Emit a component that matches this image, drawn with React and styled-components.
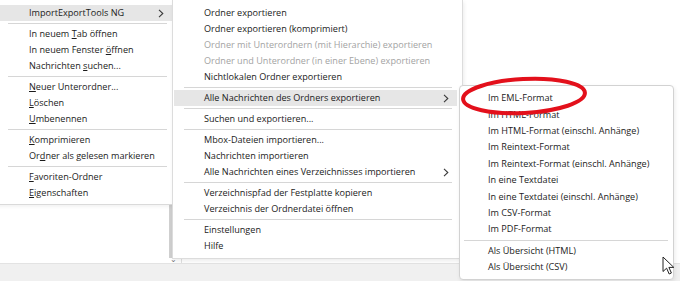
import React from 'react';
import styled, { createGlobalStyle } from 'styled-components';

const folderMenu = [
    { label: 'ImportExportTools NG', arrow: true, active: true },
    { sep: true },
    { label: 'In neuem &Tab öffnen' },
    { label: 'In neuem Fenster &öffnen' },
    { label: 'Nachrichten &suchen...' },
    { sep: true },
    { label: '&Neuer Unterordner...' },
    { label: '&Löschen' },
    { label: '&Umbenennen' },
    { sep: true },
    { label: '&Komprimieren' },
    { label: 'Or&dner als gelesen markieren' },
    { sep: true },
    { label: '&Favoriten-Ordner' },
    { label: '&Eigenschaften' },
];

const toolsMenu = [
    { label: 'Ordner exportieren' },
    { label: 'Ordner exportieren (komprimiert)' },
    { label: 'Ordner mit Unterordnern (mit Hierarchie) exportieren', disabled: true },
    { label: 'Ordner und Unterordner (in einer Ebene) exportieren', disabled: true },
    { label: 'Nichtlokalen Ordner exportieren' },
    { sep: true },
    { label: 'Alle Nachrichten des Ordners exportieren', arrow: true, active: true },
    { sep: true },
    { label: 'Suchen und exportieren...' },
    { sep: true },
    { label: 'Mbox-Dateien importieren...' },
    { label: 'Nachrichten importieren' },
    { label: 'Alle Nachrichten eines Verzeichnisses importieren', arrow: true },
    { sep: true },
    { label: 'Verzeichnispfad der Festplatte kopieren' },
    { label: 'Verzeichnis der Ordnerdatei öffnen' },
    { sep: true },
    { label: 'Einstellungen' },
    { label: 'Hilfe' },
];

const formatMenu = [
    { label: 'Im EML-Format' },
    { label: 'Im HTML-Format' },
    { label: 'Im HTML-Format (einschl. Anhänge)' },
    { label: 'Im Reintext-Format' },
    { label: 'Im Reintext-Format (einschl. Anhänge)' },
    { label: 'In eine Textdatei' },
    { label: 'In eine Textdatei (einschl. Anhänge)' },
    { label: 'Im CSV-Format' },
    { label: 'Im PDF-Format' },
    { sep: true },
    { label: 'Als Übersicht (HTML)' },
    { label: 'Als Übersicht (CSV)' },
];

// '&' marks the access key letter
const renderLabel = (label) => {
    const i = label.indexOf('&');
    if (i < 0) return label;
    return (
        <>
            {label.slice(0, i)}
            <AccessKey>{label[i + 1]}</AccessKey>
            {label.slice(i + 2)}
        </>
    );
};

const Chevron = () => (
    <ArrowIcon width='6' height='9' viewBox='0 0 6 9'>
        <path d='M1 0.8 L4.8 4.5 L1 8.2' fill='none' stroke='#3a3a3a' strokeWidth='1.1' />
    </ArrowIcon>
);

const Menu = ({ items, variant }) => (
    <MenuList>
        {items.map((item, index) => item.sep ? (
            <Separator key={`sep-${index}`} $variant={variant} />
        ) : (
            <Item
                key={`item-${index}`}
                $variant={variant}
                $active={item.active}
                $disabled={item.disabled}
            >
                <Label>{renderLabel(item.label)}</Label>
                {item.arrow && <Chevron />}
            </Item>
        ))}
    </MenuList>
);

const App = () => {
    return (
        <Page>
            <GlobalStyle />
            <Workspace>
                <FolderPane />
                <Splitter>
                    <SplitterGrip>⌄</SplitterGrip>
                </Splitter>
                <MainPane />
            </Workspace>
            <StatusBar />

            <FolderPopup>
                <Menu items={folderMenu} variant='flat' />
            </FolderPopup>
            <ToolsPopup>
                <Menu items={toolsMenu} variant='inset' />
            </ToolsPopup>
            <FormatPopup>
                <Menu items={formatMenu} variant='round' />
            </FormatPopup>

            <Marker width='134' height='46' viewBox='0 0 134 46'>
                <ellipse cx='67' cy='23' rx='61' ry='17' fill='none' stroke='#e3101b' strokeWidth='4' transform='rotate(-3 67 23)' />
            </Marker>
            <Cursor width='14' height='20' viewBox='0 0 14 20'>
                <path d='M1 1 L1 15.5 L4.6 12.2 L7.2 18 L9.4 17 L6.9 11.4 L11.8 11.4 Z' fill='#fff' stroke='#222' strokeWidth='1' strokeLinejoin='round' />
            </Cursor>
        </Page>
    );
};

const GlobalStyle = createGlobalStyle`
    html, body {
        margin: 0;
        padding: 0;
        background: #fff;
    }
    body {
        font-family: "Open Sans", "Noto Sans", sans-serif;
        color: #1b1b1b;
    }
`;
const Page = styled.div`
    position: relative;
    width: 680px;
    height: 281px;
    overflow: hidden;
    display: flex;
    flex-direction: column;
    background: #fff;
`;
const Workspace = styled.div`
    flex: 1;
    display: flex;
`;
const FolderPane = styled.div`
    width: 169px;
    background: #fff;
`;
const Splitter = styled.div`
    position: relative;
    width: 3px;
    margin-bottom: 5px;
    background: #cfcfcf;
`;
const SplitterGrip = styled.span`
    position: absolute;
    bottom: -5px;
    left: 1px;
    font-size: 8px;
    line-height: 8px;
    color: #777;
`;
const MainPane = styled.div`
    flex: 1;
    border-left: 1px solid #e0e0e0;
    margin-left: 9px;
`;
const StatusBar = styled.div`
    height: 17px;
    background: #f0f0f0;
    border-top: 1px solid #e3e3e3;
`;
const Popup = styled.div`
    position: absolute;
    background: #fff;
    box-sizing: border-box;
`;
const FolderPopup = styled(Popup)`
    left: -4px;
    top: 0;
    width: 177px;
    padding: 5px 0 3px;
    border-right: 1px solid #dadada;
    border-bottom: 1px solid #dadada;
    box-shadow: 1px 2px 3px rgba(0, 0, 0, 0.05);
`;
const ToolsPopup = styled(Popup)`
    left: 172px;
    top: 0;
    width: 291px;
    padding: 5px 0 4px;
    border: 1px solid #dcdcdc;
    border-top: none;
    box-shadow: 1px 2px 4px rgba(0, 0, 0, 0.08);
`;
const FormatPopup = styled(Popup)`
    left: 459px;
    top: 85px;
    width: 215px;
    padding: 4px 0 4px;
    border: 1px solid #d2d2d2;
    border-radius: 4px;
    box-shadow: 1px 2px 4px rgba(0, 0, 0, 0.08);
`;
const MenuList = styled.div`
    display: flex;
    flex-direction: column;
`;
const Item = styled.div`
    display: flex;
    align-items: center;
    height: ${({ $variant }) => ($variant === 'round' ? '16.4px' : '16px')};
    margin: ${({ $variant }) => ($variant === 'inset' ? '0 5px 0 1px' : '0')};
    padding-left: ${({ $variant }) => ($variant === 'flat' ? '33px' : $variant === 'inset' ? '30px' : '28px')};
    padding-right: ${({ $variant }) => ($variant === 'flat' ? '8px' : '8px')};
    font-size: 9.1px;
    white-space: nowrap;
    color: ${({ $disabled }) => ($disabled ? '#a3a3a3' : '#1b1b1b')};
    background: ${({ $active }) => ($active ? '#e6e6e6' : 'transparent')};
`;
const Label = styled.span`
    flex: 1;
    line-height: 16px;
`;
const AccessKey = styled.span`
    text-decoration: underline;
    text-underline-offset: 1px;
`;
const ArrowIcon = styled.svg`
    display: block;
    flex: none;
`;
const Separator = styled.div`
    height: 1px;
    margin: ${({ $variant }) => ($variant === 'flat' ? '2px 5px 2px 12px' : $variant === 'inset' ? '2px 10px 2px 11px' : '2px 5px 2px 4px')};
    background: #d6d6d6;
`;
const Marker = styled.svg`
    position: absolute;
    left: 457px;
    top: 73px;
    pointer-events: none;
`;
const Cursor = styled.svg`
    position: absolute;
    left: 662px;
    top: 256px;
`;

export default App;
